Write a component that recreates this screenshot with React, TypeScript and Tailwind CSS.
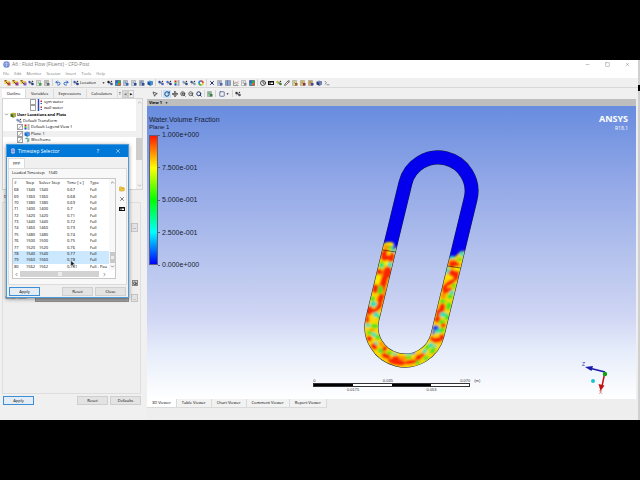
import { ReactNode } from "react";
import {
  Undo2,
  Redo2,
  RotateCw,
  Move,
  ZoomIn,
  ZoomOut,
  Search,
  MousePointer2,
  Minus,
  Square,
  X,
  ChevronUp,
  ChevronDown,
  ChevronLeft,
  ChevronRight,
  Clock,
  Pencil,
  Terminal,
  FolderOpen,
} from "lucide-react";

const menus = ["File", "Edit", "Monitor", "Session", "Insert", "Tools", "Help"];

const outlineTabs = ["Outline", "Variables", "Expressions", "Calculators"];

const viewerTabs = [
  "3D Viewer",
  "Table Viewer",
  "Chart Viewer",
  "Comment Viewer",
  "Report Viewer",
];

const steps = [
  { id: 68, step: 1340, time: "0.67", type: "Full" },
  { id: 69, step: 1360, time: "0.68", type: "Full" },
  { id: 70, step: 1380, time: "0.69", type: "Full" },
  { id: 71, step: 1400, time: "0.7", type: "Full" },
  { id: 72, step: 1420, time: "0.71", type: "Full" },
  { id: 73, step: 1440, time: "0.72", type: "Full" },
  { id: 74, step: 1460, time: "0.73", type: "Full" },
  { id: 75, step: 1480, time: "0.74", type: "Full" },
  { id: 76, step: 1500, time: "0.75", type: "Full" },
  { id: 77, step: 1520, time: "0.76", type: "Full" },
  { id: 78, step: 1540, time: "0.77", type: "Full" },
  { id: 79, step: 1560, time: "0.78", type: "Full" },
  { id: 80, step: 1562, time: "0.781", type: "Full - Pau" },
];

const legendLabels = [
  "1.000e+000",
  "7.500e-001",
  "5.000e-001",
  "2.500e-001",
  "0.000e+000",
];

const R = "#fa2800";
const O = "#ff8c00";
const Y = "#f8f000";
const G = "#3fe61c";
const C = "#22e0c0";
const B = "#0a3cf0";

// [colour, x, y, rx, ry, rotation]
type Blob = [string, number, number, number, number, number];

const blobs: Blob[] = [
  // left leg
  [Y, 118, 42, 14, 6, 0],
  [O, 112, 50, 12, 6, 0],
  [G, 122, 53, 8, 5, 0],
  [C, 130, 62, 6, 7, 10],
  [B, 133, 52, 5, 6, 0],
  [R, 106, 76, 14, 18, 10],
  [R, 124, 82, 10, 15, 10],
  [Y, 116, 70, 5, 6, 0],
  [G, 95, 105, 8, 10, 10],
  [C, 95, 108, 4, 5, 0],
  [C, 120, 104, 7, 8, 0],
  [Y, 108, 98, 7, 6, 0],
  [R, 112, 128, 14, 19, 12],
  [R, 88, 126, 9, 10, 0],
  [R, 101, 156, 11, 30, 14],
  [Y, 84, 150, 7, 18, 14],
  [G, 90, 180, 8, 13, 10],
  [R, 76, 176, 9, 14, 10],
  [O, 106, 190, 7, 14, 10],
  [R, 92, 206, 10, 16, 14],
  [C, 70, 222, 10, 8, 0],
  [G, 68, 206, 7, 7, 0],
  [R, 88, 228, 8, 13, 30],
  [R, 58, 242, 11, 14, 10],
  [C, 78, 254, 9, 7, 0],
  [G, 90, 262, 8, 7, 0],
  [R, 76, 240, 14, 6, -30],
  [R, 52, 268, 6, 12, 0],
  [C, 54, 286, 7, 6, 0],
  [G, 74, 288, 11, 7, 0],
  [O, 66, 300, 9, 4, 0],
  // bottom bend
  [G, 58, 308, 8, 6, 0],
  [C, 72, 314, 8, 6, 30],
  [R, 58, 326, 9, 8, 40],
  [G, 84, 322, 7, 8, 0],
  [C, 78, 340, 6, 5, 0],
  [R, 72, 350, 11, 8, 40],
  [O, 94, 342, 8, 6, 40],
  [G, 92, 362, 9, 7, 40],
  [R, 104, 356, 7, 9, 40],
  [R, 108, 378, 14, 8, 20],
  [G, 118, 368, 8, 6, 0],
  [C, 134, 372, 7, 4, 0],
  [R, 140, 396, 28, 10, 10],
  [R, 138, 384, 12, 7, 0],
  [O, 160, 384, 14, 6, 0],
  [C, 180, 370, 16, 4, -10],
  [B, 190, 368, 7, 3, -10],
  [R, 182, 396, 20, 7, -8],
  [G, 176, 382, 9, 5, 0],
  [R, 206, 382, 11, 8, -30],
  [G, 204, 398, 8, 5, -20],
  [C, 224, 364, 8, 6, -30],
  [G, 228, 384, 9, 6, -30],
  [R, 218, 374, 6, 6, 0],
  [C, 242, 346, 9, 7, -30],
  [G, 248, 362, 11, 7, -50],
  [O, 256, 374, 7, 6, 0],
  [G, 232, 352, 7, 7, 0],
  [R, 262, 330, 16, 8, -10],
  [R, 246, 326, 6, 7, 0],
  [C, 256, 348, 5, 4, 0],
  [R, 276, 322, 8, 10, 0],
  // right leg
  [C, 336, 72, 7, 8, 0],
  [G, 328, 88, 8, 5, 0],
  [C, 306, 82, 9, 5, 0],
  [O, 308, 94, 12, 6, 0],
  [R, 312, 104, 17, 11, 10],
  [Y, 322, 114, 12, 5, 0],
  [C, 293, 122, 6, 10, 10],
  [R, 308, 130, 12, 11, 20],
  [R, 319, 138, 8, 16, 14],
  [Y, 298, 142, 7, 6, 0],
  [R, 300, 158, 18, 7, -30],
  [R, 284, 174, 8, 12, 20],
  [G, 312, 168, 5, 8, 0],
  [R, 292, 182, 16, 6, -30],
  [C, 306, 188, 7, 7, 0],
  [G, 300, 200, 8, 7, 0],
  [O, 280, 198, 7, 8, 0],
  [G, 278, 214, 9, 6, 0],
  [G, 296, 228, 8, 12, 12],
  [R, 276, 234, 9, 14, 14],
  [R, 266, 248, 8, 12, 14],
  [C, 280, 254, 11, 7, 0],
  [G, 292, 262, 8, 9, 0],
  [R, 262, 268, 9, 10, 20],
  [G, 276, 276, 9, 7, 0],
  [B, 257, 295, 10, 9, 0],
  [C, 264, 304, 9, 6, 0],
  [G, 276, 300, 8, 8, 0],
  [R, 280, 286, 7, 7, 0],
  [B, 250, 308, 4, 6, 0],
];

function Cube({ a, b }: { a: string; b: string }) {
  return (
    <svg viewBox="0 0 12 12" className="size-[6px]">
      <path d="M1 3l5-2 5 2-5 2z" fill={b} />
      <path d="M1 3l5 2v6l-5-2z" fill={a} />
      <path d="M11 3L6 5v6l5-2z" fill={b} stroke={a} />
    </svg>
  );
}

function Doc({ a, mark }: { a: string; mark: string }) {
  return (
    <svg viewBox="0 0 12 12" className="size-[6px]">
      <path d="M1 1h8v10H1z" fill={a} stroke="#8a8a8a" />
      <path d="M3 4h4M3 6h3" stroke="#666" />
      <path d="M6 6h5v5H6z" fill={mark} />
    </svg>
  );
}

// folder with a coloured badge, used by the file actions
function FileIcon({ mark }: { mark: string }) {
  return (
    <svg viewBox="0 0 14 14" className="size-[7px]">
      <path d="M1 2h5l1 2h5v6H1z" fill="#f2cc50" />
      <path d="M1 2h4v3H1z" fill="#8a5a28" />
      <path d="M7 7h6v6H7z" fill={mark} />
      <path d="M4 6l5 5" stroke="#333" strokeWidth="1.5" />
    </svg>
  );
}

function Nodes({ a, b }: { a: string; b: string }) {
  return (
    <svg viewBox="0 0 12 12" className="size-[6px]">
      <path d="M2 3l8 6M10 2L3 8" stroke="#445" strokeWidth="1.200" />
      <circle cx="3" cy="4" r="2.400" fill={a} />
      <circle cx="9" cy="8" r="2.600" fill={b} />
      <circle cx="9" cy="3" r="1.400" fill="#334" />
    </svg>
  );
}

function Grid({ a, b }: { a: string; b: string }) {
  return (
    <svg viewBox="0 0 12 12" className="size-[6px]">
      <path d="M1 1h10v10H1z" fill={a} stroke="#667" />
      <path d="M1 4h10M1 8h10M5 1v10" stroke={b} />
    </svg>
  );
}

function Rainbow() {
  return (
    <svg viewBox="0 0 12 12" className="size-[6px]">
      <path d="M1 1h5v5H1z" fill="#2b62d9" />
      <path d="M6 1h5v5H6z" fill="#28b44a" />
      <path d="M1 6h5v5H1z" fill="#28a0c8" />
      <path d="M6 6h5v5H6z" fill="#e8641e" />
      <path d="M1 1h10v10H1z" fill="none" stroke="#334" />
    </svg>
  );
}

function Wheel() {
  return (
    <svg viewBox="0 0 12 12" className="size-[6px]" fill="none" strokeWidth="3">
      <path d="M6 2a4 4 0 0 1 4 4" stroke="#e0402a" />
      <path d="M10 6a4 4 0 0 1-4 4" stroke="#e8c020" />
      <path d="M6 10a4 4 0 0 1-4-4" stroke="#20b46a" />
      <path d="M2 6a4 4 0 0 1 4-4" stroke="#2878e0" />
    </svg>
  );
}

function Chart() {
  return (
    <svg viewBox="0 0 12 12" className="size-[6px]" fill="none">
      <path d="M1 1v10h10" stroke="#444" />
      <path d="M2 8l3-4 3 2 3-4" stroke="#c05050" />
      <path d="M2 5l4 4 5-2" stroke="#50905a" />
    </svg>
  );
}

function Bars() {
  return (
    <svg viewBox="0 0 12 12" className="size-[6px]">
      <path d="M1 1h4v4H1z" fill="#e03020" />
      <path d="M1 5h4v3H1z" fill="#30c040" />
      <path d="M1 8h4v3H1z" fill="#2040e0" />
      <path d="M7 2h4M7 6h4M7 10h4" stroke="#445" strokeWidth="1.500" />
    </svg>
  );
}

function Region() {
  return (
    <svg viewBox="0 0 12 12" className="size-[6px]">
      <path d="M3 0v12" stroke="#2848b8" strokeWidth="3" />
      <path d="M7 3h3v3H7z" fill="#c02838" />
      <path d="M7 8h3v2H7z" fill="#3858c0" />
    </svg>
  );
}

function FilmStrip() {
  return (
    <svg viewBox="0 0 12 12" className="size-[6px]">
      <path d="M0 2h12v8H0z" fill="#111" />
      <path d="M3 5h2v3H3zM6 5h4v3H6z" fill="#fff" />
    </svg>
  );
}

function Tool({
  label,
  active,
  children,
}: {
  label: string;
  active?: boolean;
  children: ReactNode;
}) {
  return (
    <button
      aria-label={label}
      className={`flex size-2 shrink-0 items-center justify-center ${
        active ? "bg-[#c5e2f8]" : ""
      }`}
    >
      {children}
    </button>
  );
}

function Sep() {
  return <span className="mx-px h-[7px] w-px shrink-0 bg-[#d4d4d4]" />;
}

function PushButton({
  primary,
  children,
}: {
  primary?: boolean;
  children: ReactNode;
}) {
  return (
    <button
      className={`flex h-[9px] w-[31px] items-center justify-center border ${
        primary
          ? "border-[#3c8fd6] bg-[#e4edf5]"
          : "border-[#cfcfcf] bg-[#e3e3e3]"
      }`}
    >
      {children}
    </button>
  );
}

function MainToolbar() {
  return (
    <div className="flex h-[10px] items-center border-b border-[#d8d8d8] bg-[#f0f0f0] pl-[3px]">
      <Tool label="Load results"><FileIcon mark="#c0503a" /></Tool>
      <Tool label="Close results"><FileIcon mark="#a03a8a" /></Tool>
      <Tool label="Load state"><FileIcon mark="#8a6ac0" /></Tool>
      <Tool label="Save state"><Nodes a="#4858a8" b="#2c3c80" /></Tool>
      <Tool label="Refresh"><Doc a="#e8f4e8" mark="#3c9a4a" /></Tool>
      <Tool label="Save picture"><Doc a="#d0d0d0" mark="#666666" /></Tool>
      <Sep />
      <Tool label="Undo"><Undo2 className="size-[6px] text-[#2c66c4]" strokeWidth={4} /></Tool>
      <Tool label="Redo"><Redo2 className="size-[6px] text-[#2c66c4]" strokeWidth={4} /></Tool>
      <Sep />
      <button className="flex w-[33px] items-center gap-px">
        <Nodes a="#4060b8" b="#203c88" />
        <span>Location</span>
        <span className="ml-auto mr-px text-[3px]">▼</span>
      </button>
      <Tool label="Vector"><Nodes a="#222222" b="#3858a8" /></Tool>
      <Tool label="Contour"><Rainbow /></Tool>
      <Tool label="Streamline"><Doc a="#b8c8e8" mark="#3a64b0" /></Tool>
      <Tool label="Particle track"><Doc a="#d8e0f0" mark="#2a4a90" /></Tool>
      <Tool label="Volume rendering"><Doc a="#98acd8" mark="#34508c" /></Tool>
      <Tool label="Text"><Cube a="#1e4a9a" b="#3aa0d8" /></Tool>
      <Sep />
      <Tool label="Coordinate frame"><Nodes a="#304898" b="#4a66c0" /></Tool>
      <Tool label="Instance transform"><Nodes a="#5070c8" b="#283878" /></Tool>
      <Tool label="Legend"><Bars /></Tool>
      <Tool label="Clip plane"><Nodes a="#80a0d0" b="#385088" /></Tool>
      <Tool label="Variables"><Nodes a="#405898" b="#80a0b8" /></Tool>
      <Tool label="Color map"><Wheel /></Tool>
      <Sep />
      <Tool label="Delete"><X className="size-[6px] text-[#22306c]" strokeWidth={4} /></Tool>
      <Tool label="Figure"><Doc a="#b8c4e8" mark="#5064a8" /></Tool>
      <Tool label="Table"><Grid a="#a8c4e8" b="#30588c" /></Tool>
      <Tool label="Chart"><Chart /></Tool>
      <Tool label="Comment"><Doc a="#f4f4f4" mark="#888888" /></Tool>
      <Tool label="Report"><Rainbow /></Tool>
      <Sep />
      <Tool label="Timestep selector"><Clock className="size-[6px] text-[#222]" strokeWidth={3} /></Tool>
      <Tool label="Animation"><FilmStrip /></Tool>
      <Tool label="Quick editor"><Nodes a="#c8c020" b="#3c8030" /></Tool>
      <Tool label="Probe"><Pencil className="size-[6px] text-[#444]" strokeWidth={3} /></Tool>
      <Tool label="Turbo"><Doc a="#e8e0a0" mark="#9a5a20" /></Tool>
      <Tool label="Function calculator"><Doc a="#e8c860" mark="#8a2a50" /></Tool>
      <Tool label="Macro calculator"><Doc a="#d8a850" mark="#4a40a0" /></Tool>
      <Tool label="Case comparison"><Cube a="#203a78" b="#8090b8" /></Tool>
      <Tool label="Command editor"><Terminal className="size-[6px] text-[#667]" strokeWidth={3} /></Tool>
    </div>
  );
}

function ViewToolbar() {
  return (
    <div className="flex h-[11px] items-center bg-[#f0f0f0] pl-1">
      <Tool label="Select"><MousePointer2 className="size-[6px] text-[#333]" strokeWidth={3} /></Tool>
      <span className="w-px" />
      <Sep />
      <Tool label="Rotate" active><RotateCw className="size-[6px] text-[#234a86]" strokeWidth={4} /></Tool>
      <Tool label="Pan"><Move className="size-[6px] text-[#222]" strokeWidth={3} /></Tool>
      <Tool label="Zoom in"><ZoomIn className="size-[6px] text-[#333]" strokeWidth={3} /></Tool>
      <Tool label="Zoom out"><ZoomOut className="size-[6px] text-[#444]" strokeWidth={3} /></Tool>
      <Tool label="Zoom box"><Search className="size-[6px] text-[#223a70]" strokeWidth={4} /></Tool>
      <Sep />
      <Tool label="Fit view"><Doc a="#8fc89a" mark="#3c7a4c" /></Tool>
      <Sep />
      <button aria-label="Viewport layout" className="flex w-[14px] items-center justify-center gap-px text-[3px]">
        <Square className="size-[6px] text-[#4a5a94]" strokeWidth={3} />
        ▼
      </button>
      <Sep />
      <Tool label="Synchronize views"><Nodes a="#333333" b="#555555" /></Tool>
    </div>
  );
}

function TreeItem({
  label,
  icon,
  indent,
  checked,
  selected,
}: {
  label: string;
  icon: ReactNode;
  indent: string;
  checked?: boolean;
  selected?: boolean;
}) {
  return (
    <li className={`${indent} ${selected ? "bg-[#f0f0f0]" : ""}`}>
      <label className="flex h-[6px] items-center gap-px">
        {checked !== undefined && (
          <input
            type="checkbox"
            defaultChecked={checked}
            className="size-[6px] shrink-0 appearance-none border border-[#a0a0a0] bg-white checked:bg-[linear-gradient(135deg,#fff_45%,#777_55%,#fff_65%)]"
          />
        )}
        {icon}
        <span>{label}</span>
      </label>
    </li>
  );
}

function Sidebar() {
  return (
    <aside className="flex w-[147px] shrink-0 flex-col bg-[#f0f0f0] pl-[2px] pr-1">
      <div role="tablist" className="flex h-[10px] items-end pr-[9px]">
        {outlineTabs.map((tab, i) => (
          <button
            key={tab}
            role="tab"
            aria-selected={i === 0}
            className={`flex h-[9px] grow items-center justify-center border-r border-[#dcdcdc] ${
              i === 0 ? "bg-white" : ""
            }`}
          >
            {tab}
          </button>
        ))}
        <button role="tab" className="h-[9px] px-px">T</button>
        <button aria-label="Scroll tabs left" className="flex h-[8px] w-[6px] items-center justify-center border border-[#ccc] bg-[#d8d8d8] text-[3px] text-[#777]">◀</button>
        <button aria-label="Scroll tabs right" className="flex h-[8px] w-[6px] items-center justify-center border border-[#ccc] text-[3px]">▶</button>
      </div>
      <div className="flex h-[92px] border border-[#d4d4d4] bg-white">
        <ul className="flex h-[44px] grow flex-col justify-between">
          <TreeItem label="sym water" indent="pl-[27px]" checked={false} icon={<Region />} />
          <TreeItem label="wall water" indent="pl-[27px]" checked={false} icon={<Region />} />
          <li className="flex h-[6px] items-center gap-px pl-px font-bold">
            <ChevronDown className="size-[5px]" />
            <Cube a="#38702c" b="#d8b028" />
            User Locations and Plots
          </li>
          <TreeItem label="Default Transform" indent="pl-[13px]" icon={<Nodes a="#7090c8" b="#98a8c8" />} />
          <TreeItem label="Default Legend View 1" indent="pl-[14px]" checked icon={<Bars />} />
          <TreeItem label="Plane 1" indent="pl-[14px]" checked selected icon={<Cube a="#2468c8" b="#58a0e8" />} />
          <TreeItem label="Wireframe" indent="pl-[14px]" checked icon={<Cube a="#f0f4f4" b="#58a0a0" />} />
        </ul>
        <div className="flex w-[6px] flex-col items-center bg-[#f0f0f0] py-px">
          <ChevronUp className="size-[5px] text-[#777]" />
          <div className="mt-[33px] h-[22px] w-[6px] bg-[#cdcdcd]" />
          <ChevronDown className="mt-auto size-[5px] text-[#777]" />
        </div>
      </div>
      <p className="mt-1 h-[6px] w-[5px] overflow-hidden pl-[2px]">D</p>
      <section className="mb-[2px] mr-[2px] mt-[2px] flex grow flex-col items-end border border-[#dedede] bg-[#efefef] pr-[2px] pt-5">
        <button aria-label="Edit domains" className="h-[9px] w-[7px] border border-[#c4c4c4] bg-[#e3e3e3] leading-[6px]">...</button>
        <button aria-label="Pick point" className="mt-12 flex h-[6px] w-[6px] items-center justify-center border border-[#888] bg-[#ccc]">
          <Search className="size-[5px]" strokeWidth={3} />
        </button>
        <div className="mt-2 flex w-full items-center gap-[2px] pl-[2px] text-[#444]">
          <label htmlFor="offset-color" className="w-[28px]">Offset Color</label>
          <input id="offset-color" className="h-[7px] min-w-0 grow border border-[#909090] bg-[#a8a8a8]" />
          <button aria-label="Choose color" className="h-[8px] w-[7px] border border-[#c4c4c4] bg-[#e3e3e3] leading-[5px]">...</button>
        </div>
      </section>
      <div className="mb-[15px] mr-[2px] flex gap-[2px] pl-px">
        <PushButton primary>Apply</PushButton>
        <span className="grow" />
        <PushButton>Reset</PushButton>
        <PushButton>Defaults</PushButton>
      </div>
    </aside>
  );
}

function Model() {
  const loop =
    "M258.4 77.1A33.5 33.5 0 0 1 323.6 92.9L290.6 228.9A33.5 33.5 0 0 1 225.4 213.1Z";
  return (
    <svg viewBox="0 0 489 293" className="absolute inset-0 h-full w-full">
      <defs>
        <mask id="loop" maskUnits="userSpaceOnUse" x="200" y="30" width="150" height="250">
          <path d={loop} fill="none" stroke="#fff" strokeWidth="13" />
        </mask>
        <filter id="smooth" x="-10%" y="-10%" width="120%" height="120%">
          <feGaussianBlur stdDeviation="3" />
        </filter>
      </defs>
      <path d={loop} fill="none" stroke="#1b2140" strokeWidth="14" />
      <g mask="url(#loop)">
        <path d="M200 30h150v250H200z" fill="#0400ee" />
        <g transform="translate(203 124) scale(.3333)">
          <g filter="url(#smooth)">
            <path d="M20 46l74-4 20-4 14 8 30 18 110 20 24 2 20-2 20-20 20 0v360H20z" fill="#fbd800" />
            {blobs.map(([fill, cx, cy, rx, ry, turn], i) => (
              <ellipse
                key={i}
                cx={cx}
                cy={cy}
                rx={rx}
                ry={ry}
                fill={fill}
                transform={`rotate(${turn} ${cx} ${cy})`}
              />
            ))}
          </g>
          <path d="M98 60l40 6M292 108l40 6" stroke="#3a2010" strokeWidth="2" />
        </g>
      </g>
      <g strokeWidth="1.500">
        <path d="M458 266l-14-3.600" stroke="#1a1ab0" />
        <path d="M438 261l8-1-1.500 5z" fill="#1a1ab0" />
        <path d="M458 266l-3 14" stroke="#c01414" />
        <path d="M453.500 285l-2-7 6 1.500z" fill="#c01414" />
      </g>
      <circle cx="458" cy="268" r="2.200" fill="#12a012" />
      <circle cx="446" cy="275" r="2" fill="#18c4d0" />
      <text x="435" y="259.500" fontSize="5" fill="#3434c0">Z</text>
      <text x="452" y="288" fontSize="5" fill="#c84848">X</text>
    </svg>
  );
}

function Viewer() {
  return (
    <main className="flex min-w-0 grow flex-col bg-[#eeeeee] pr-[2px]">
      <ViewToolbar />
      <button className="flex h-[7px] items-center gap-[3px] bg-[#bebebe] pl-[2px] font-bold">
        View 1 <span className="text-[3px]">▼</span>
      </button>
      <div className="relative grow bg-[linear-gradient(#688cdf,#94a9e7_27%,#b9c6ee_55%,#d0d6f4_72%,#e6edfa_84%,#ffffff)] font-['Liberation_Sans',sans-serif] text-[#161c30]">
        <Model />
        <div className="relative flex justify-between pl-[2px] pr-2">
          <div className="pt-[10px] text-[7px] leading-[8px]">
            <p>Water.Volume Fraction</p>
            <p className="text-[6px] leading-[6px]">Plane 1</p>
            <div className="mt-px flex">
              <div className="my-1 w-[9px] border border-[#5a5f80] bg-[linear-gradient(#ff1800,#ffff00_25%,#00ff00_50%,#00ffff_75%,#0000ff)]" />
              <ul className="flex h-[138px] flex-col justify-between">
                {legendLabels.map((label) => (
                  <li key={label} className="flex items-center gap-[2px]">
                    <span className="h-px w-[2px] bg-[#5a5f80]" />
                    {label}
                  </li>
                ))}
              </ul>
            </div>
          </div>
          <div className="pt-[7px] text-right font-['Open_Sans',sans-serif] text-white">
            <p className="text-[9px] font-bold leading-[12px]">ANSYS</p>
            <p className="text-[5px] leading-[6px]">R18.1</p>
          </div>
        </div>
        <div className="absolute bottom-[7px] left-[34%] w-[157px] text-[4px] leading-[5px] text-[#333]">
          <div className="flex justify-between">
            <span>0</span>
            <span>0.035</span>
            <span>0.070</span>
          </div>
          <span className="absolute -right-[10px] top-0">(m)</span>
          <div className="flex h-1 border border-[#333]">
            <span className="w-1/4 bg-black" />
            <span className="w-1/4 bg-white" />
            <span className="w-1/4 bg-black" />
            <span className="w-1/4 bg-white" />
          </div>
          <div className="flex justify-around">
            <span>0.0175</span>
            <span>0.053</span>
          </div>
        </div>
      </div>
      <div role="tablist" className="mb-3 flex h-[9px]">
        {viewerTabs.map((tab, i) => (
          <button
            key={tab}
            role="tab"
            aria-selected={i === 0}
            className={`border-b border-r border-[#dadada] px-[5px] ${
              i === 0 ? "bg-white" : "bg-[#f2f2f2]"
            }`}
          >
            {tab}
          </button>
        ))}
      </div>
    </main>
  );
}

function TimestepDialog() {
  return (
    <div
      role="dialog"
      aria-label="Timestep Selector"
      className="absolute left-[6px] top-[84px] flex w-[123px] flex-col border border-[#4c9ad8] bg-[#f0f0f0] shadow-[0_1px_4px_rgba(0,0,0,0.45)]"
    >
      <header className="flex h-3 items-center bg-[#0078d7] pl-[3px] pr-[7px] text-[5px] text-white">
        <svg viewBox="0 0 12 12" className="mr-[2px] size-[6px]">
          <path d="M2 2l4-2 4 2v8l-4 2-4-2z" fill="#a8b8ec" />
          <path d="M3 4h6M3 7h6" stroke="#5468c0" />
        </svg>
        Timestep Selector
        <button aria-label="Help" className="ml-auto mr-4">?</button>
        <button aria-label="Close window"><X className="size-[6px]" /></button>
      </header>
      <div className="px-px">
        <div role="tablist" className="flex pt-px">
          <button role="tab" aria-selected className="h-[10px] w-[17px] border border-b-0 border-[#dcdcdc] bg-white">PPP</button>
        </div>
        <div className="border border-[#dcdcdc] bg-[#f8f8f8] px-[3px] pb-[5px] pt-px">
          <p className="flex gap-[3px]">
            <span>Loaded Timestep:</span>
            <span>1540</span>
          </p>
          <div className="mt-[2px] flex gap-[3px]">
            <div className="w-[104px] border border-[#c8c8c8] bg-white">
              <div className="flex">
                <div className="w-[96px] overflow-hidden">
                  <table className="h-[91px] w-full table-fixed border-collapse text-left">
                    <thead>
                      <tr className="h-2">
                        <th className="w-[13px] pl-px font-normal">#</th>
                        <th className="w-[13px] font-normal">Step</th>
                        <th className="w-[28px] font-normal">Solver Step</th>
                        <th className="w-[23px] font-normal">Time [ s ]</th>
                        <th className="font-normal">Type</th>
                      </tr>
                    </thead>
                    <tbody>
                      {steps.map((row) => (
                        <tr
                          key={row.id}
                          className={row.id === 78 || row.id === 79 ? "bg-[#cce8ff]" : ""}
                        >
                          <td className="pl-px">{row.id}</td>
                          <td>{row.step}</td>
                          <td>{row.step}</td>
                          <td>{row.time}</td>
                          <td className="whitespace-nowrap">{row.type}</td>
                        </tr>
                      ))}
                    </tbody>
                  </table>
                </div>
                <div className="flex w-[6px] flex-col items-center bg-[#f8f8f8] py-px">
                  <ChevronUp className="size-[5px]" />
                  <div className="mb-px mt-auto flex h-[11px] w-[5px] items-center justify-center bg-[#c8c8c8]">
                    <span className="size-[3px] bg-[#ececec]" />
                  </div>
                  <ChevronDown className="size-[5px]" />
                </div>
              </div>
              <div className="flex h-2 items-center gap-px px-px">
                <ChevronLeft className="size-[5px]" />
                <div className="mr-[2px] flex h-[6px] w-[79px] items-center justify-center bg-[#d2d2d2]">
                  <span className="size-[4px] bg-[#ececec]" />
                </div>
                <ChevronRight className="size-[5px]" />
              </div>
            </div>
            <div className="flex flex-col gap-1 pt-2">
              <button aria-label="Add timesteps"><FolderOpen className="size-[6px] fill-[#f4cc40] text-[#c89018]" /></button>
              <button aria-label="Delete timestep"><X className="size-[6px] text-[#555]" strokeWidth={3} /></button>
              <button aria-label="Animate timesteps"><FilmStrip /></button>
            </div>
          </div>
        </div>
      </div>
      <footer className="flex gap-[2px] px-[2px] pb-px pt-[2px]">
        <PushButton primary>Apply</PushButton>
        <span className="grow" />
        <PushButton>Reset</PushButton>
        <PushButton>Close</PushButton>
      </footer>
      <svg viewBox="0 0 12 18" className="absolute left-[63px] top-[115px] h-2 w-[6px]">
        <path d="M1 1v13l3-3 3 6 2-1-3-6h5z" fill="#111" stroke="#fff" />
      </svg>
    </div>
  );
}

export default function App() {
  return (
    <div className="flex min-h-screen flex-col bg-black py-[60px] font-['Open_Sans',sans-serif] text-[4px] leading-[6px] text-black">
      <div className="relative flex grow flex-col border-r-2 border-[#d0d0d0] bg-white">
        <header className="flex h-2 items-center gap-[2px] pl-[3px] pr-2 text-[#777]">
          <svg viewBox="0 0 12 12" className="size-[7px]">
            <circle cx="6" cy="6" r="5.500" fill="#6c84d0" />
            <path d="M2 4h8M2 7h8M6 1v10" stroke="#cdd8f6" />
          </svg>
          <h1 className="text-[5px]">A6 : Fluid Flow (Fluent) - CFD-Post</h1>
          <div className="ml-auto flex gap-[15px]">
            <button aria-label="Minimize"><Minus className="size-[5px]" /></button>
            <button aria-label="Maximize"><Square className="size-[5px]" /></button>
            <button aria-label="Close"><X className="size-[5px]" /></button>
          </div>
        </header>
        <nav className="flex h-[10px] items-center gap-[5px] pl-[3px] pt-px text-[#777]">
          {menus.map((menu) => (
            <button key={menu}>{menu}</button>
          ))}
        </nav>
        <MainToolbar />
        <div className="flex grow">
          <Sidebar />
          <Viewer />
        </div>
        <TimestepDialog />
        <span className="absolute -right-[2px] top-[25px] h-[6px] w-[2px] bg-black" />
      </div>
    </div>
  );
}
